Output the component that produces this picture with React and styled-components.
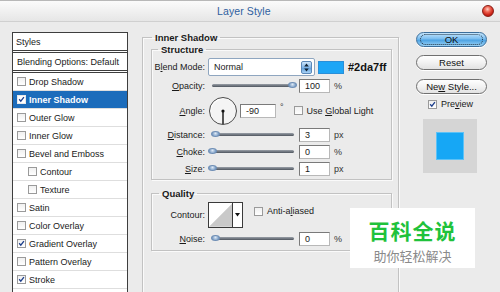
import React from "react";
import styled, { createGlobalStyle } from "styled-components";

const Global = createGlobalStyle`
  html, body { margin: 0; padding: 0; width: 500px; height: 292px; overflow: hidden; background: #ebebeb; }
  body { font-family: "Liberation Sans", Arial, sans-serif; font-size: 9px; color: #1a1a1a; }
  * { box-sizing: border-box; }
`;

const Dialog = styled.div`
  position: relative;
  width: 500px;
  height: 292px;
  overflow: hidden;
  background: #ebebeb;
  border-top: 1px solid #b8b8b8;
`;

const TitleBar = styled.div`
  height: 21px;
  display: flex;
  align-items: center;
  background: linear-gradient(#fbfbfb, #e6e6e6);
  border-bottom: 1px solid #d0d0d0;
`;

const Title = styled.div`
  margin-left: 217px;
  font-size: 10.5px;
  color: #2f5f9f;
  letter-spacing: 0.1px;
`;

const Close = styled.div`
  margin-left: auto;
  margin-right: 6px;
  width: 12px;
  height: 12px;
  border-radius: 50%;
  border: 1px solid #8a1e16;
  background: radial-gradient(circle at 45% 32%, #ffd0c4 0, #f06a58 30%, #cc2418 65%, #901008 100%);
`;

const Body = styled.div`
  display: flex;
  align-items: flex-start;
  padding: 10px 0 0 12px;
`;

/* ---------- left list ---------- */
const List = styled.div`
  width: 116px;
  background: #fff;
  border: 1px solid #3e3e3e;
  flex-shrink: 0;
`;

const Header = styled.div`
  height: 20px;
  display: flex;
  align-items: center;
  padding-left: 3px;
  border-bottom: 3px double #3e3e3e;
`;

const ListItem = styled.div`
  height: 18px;
  display: flex;
  align-items: center;
  gap: 3px;
  padding-left: ${(p) => (p.$sub ? 15 : 4)}px;
  border-bottom: 1px solid #dedede;
  background: ${(p) => (p.$sel ? "#1c6cbb" : "#fff")};
  color: ${(p) => (p.$sel ? "#fff" : "#1a1a1a")};
  font-weight: ${(p) => (p.$sel ? "bold" : "normal")};
`;

const BlendItem = styled(ListItem)`
  height: 20px;
  padding-left: 4px;
  border-bottom: 3px double #3e3e3e;
`;

const Box = styled.span`
  width: 9px;
  height: 9px;
  flex-shrink: 0;
  border: 1px solid ${(p) => (p.$light ? "#e8e8e8" : "#9a9a9a")};
  background: ${(p) => (p.$light ? "#fff" : "linear-gradient(#f0f0f0, #ffffff)")};
  display: inline-flex;
  align-items: center;
  justify-content: center;
`;

const Check = ({ on, light }) => (
  <Box $light={light}>
    {on && (
      <svg width="9" height="9" viewBox="0 0 9 9">
        <path d="M1.5 4.2 L3.6 6.6 L7.6 1.4" fill="none" stroke="#1d3f8c" strokeWidth="1.7" />
      </svg>
    )}
  </Box>
);

/* ---------- group boxes ---------- */
const Group = styled.fieldset`
  margin: ${(p) => p.$m || 0};
  padding: ${(p) => p.$pad || 0};
  border: 1px solid #c2c2c2;
  box-shadow: inset 1px 1px 0 #fafafa, 1px 1px 0 #fafafa;
  min-width: 0;
  width: ${(p) => p.$w}px;
  height: ${(p) => (p.$h ? p.$h + "px" : "auto")};
  flex-shrink: 0;
`;

const Legend = styled.legend`
  margin-left: ${(p) => p.$ml || 0}px;
  padding: 0 3px;
  font-weight: bold;
  font-size: 9.5px;
  line-height: 11px;
  color: #1a1a1a;
`;

const Row = styled.div`
  display: flex;
  align-items: ${(p) => p.$align || "center"};
  height: ${(p) => p.$h || 17}px;
  margin-top: ${(p) => p.$mt || 0}px;
`;

const Label = styled.span`
  width: 53px;
  text-align: right;
  flex-shrink: 0;
  margin-top: ${(p) => p.$mt || 0}px;
  white-space: nowrap;
`;

const Select = styled.div`
  margin-left: 3px;
  width: 107px;
  height: 18px;
  border: 1px solid #8fa6c0;
  border-radius: 2px;
  background: #fff;
  display: flex;
  align-items: center;
  padding-left: 5px;
`;

const Spin = styled.div`
  margin-left: auto;
  margin-right: 2px;
  width: 11px;
  height: 13px;
  border-radius: 2px;
  border: 1px solid #5c88b8;
  background: linear-gradient(#cfe6fb, #7fb3e6 50%, #5a9ad8 51%, #a9d2f6);
  display: flex;
  align-items: center;
  justify-content: center;
`;

const Swatch = styled.div`
  margin-left: 3px;
  width: 26px;
  height: 13px;
  background: #1ea6f6;
  border: 1px solid #2b8fd8;
`;

const Hex = styled.span`
  margin-left: 4px;
  font-weight: bold;
  font-size: 11px;
  color: #111;
`;

const Track = styled.div`
  position: relative;
  margin-left: 7px;
  width: 82px;
  height: 3px;
  border-radius: 2px;
  background: linear-gradient(#9aa0a8, #4e555e);
  flex-shrink: 0;
`;

const Knob = styled.span`
  position: absolute;
  top: -2px;
  width: 9px;
  height: 6px;
  margin-left: -4px;
  border-radius: 50%;
  background: radial-gradient(circle at 50% 35%, #dfeaf6, #7d9fc6 70%);
  border: 1px solid #6d8db4;
`;

const Input = styled.div`
  margin-left: ${(p) => p.$ml ?? 5}px;
  width: ${(p) => p.$w || 31}px;
  height: 14px;
  border: 1px solid #7a7a7a;
  border-right-color: #b8b8b8;
  border-bottom-color: #b8b8b8;
  background: #fff;
  display: flex;
  align-items: center;
  padding-left: 5px;
  flex-shrink: 0;
`;

const Unit = styled.span`
  margin-left: ${(p) => p.$ml ?? 4}px;
  color: #333;
  align-self: ${(p) => (p.$top ? "flex-start" : "auto")};
  margin-top: ${(p) => p.$mt || 0}px;
`;

const Dial = styled.div`
  margin-left: 4px;
  width: 28px;
  height: 28px;
  border-radius: 50%;
  border: 1px solid #4a4a4a;
  background: #f4f4f4;
  box-shadow: inset 1px 1px 1px #fff;
  flex-shrink: 0;
`;

const CheckLabel = styled.span`
  display: inline-flex;
  align-items: center;
  gap: 4px;
  margin-left: ${(p) => p.$ml || 0}px;
  margin-top: ${(p) => p.$mt || 0}px;
  white-space: nowrap;
`;

const ContourBox = styled.div`
  margin-left: 3px;
  width: 35px;
  height: 26px;
  border: 1px solid #3a3a3a;
  background: #fff;
  display: flex;
  flex-shrink: 0;
`;

const ContourArrow = styled.div`
  width: 10px;
  border-left: 1px solid #3a3a3a;
  display: flex;
  align-items: center;
  justify-content: center;
  background: #fff;
`;

/* ---------- right side ---------- */
const Side = styled.div`
  margin-left: 17px;
  width: 71px;
  display: flex;
  flex-direction: column;
`;

const Button = styled.div`
  position: relative;
  height: 15px;
  margin-top: ${(p) => p.$mt || 0}px;
  border-radius: 8px;
  border: 1px solid ${(p) => (p.$primary ? "#3c6f9c" : "#707070")};
  background: ${(p) =>
    p.$primary
      ? "linear-gradient(#c6e6fc, #79bdf0 45%, #4da3e3 55%, #9bd3f7)"
      : "linear-gradient(#ffffff, #f2f2f2 50%, #e2e2e2)"};
  display: flex;
  align-items: center;
  justify-content: center;
  font-size: 9.5px;
  color: #111;
  box-shadow: 0 1px 0 #fff;
  &::after {
    content: "";
    display: ${(p) => (p.$primary ? "block" : "none")};
    position: absolute;
    inset: 1px 3px;
    border-radius: 6px;
    border: 1px dotted #1c2c3c;
  }
`;

const PreviewCheck = styled(CheckLabel)`
  margin: 5px 0 0 12px;
`;

const PreviewBox = styled.div`
  margin: 10px 0 0 7px;
  width: 54px;
  height: 54px;
  background: #d5d5d5;
  display: flex;
  align-items: center;
  justify-content: center;
`;

const PreviewSquare = styled.div`
  width: 26px;
  height: 26px;
  background: #16a7f5;
  box-shadow: 0 0 0 1px #5cc2f7;
`;

/* ---------- watermark ---------- */
const Watermark = styled.div`
  position: absolute;
  left: 350px;
  top: 207px;
  width: 125px;
  height: 60px;
  padding-top: 7px;
  background: #fff;
  display: flex;
  flex-direction: column;
  align-items: center;
  font-family: "Noto Sans CJK SC", sans-serif;
`;

const WmBig = styled.div`
  font-size: 21px;
  line-height: 31px;
  height: 31px;
  font-weight: bold;
  color: #1fc23b;
  letter-spacing: 1px;
`;

const WmSmall = styled.div`
  font-size: 13px;
  line-height: 19px;
  height: 19px;
  color: #8a8a8a;
`;

const items = [
  { name: "Drop Shadow" },
  { name: "Inner Shadow", on: true, sel: true },
  { name: "Outer Glow" },
  { name: "Inner Glow" },
  { name: "Bevel and Emboss" },
  { name: "Contour", sub: true },
  { name: "Texture", sub: true },
  { name: "Satin" },
  { name: "Color Overlay" },
  { name: "Gradient Overlay", on: true },
  { name: "Pattern Overlay" },
  { name: "Stroke", on: true },
  { name: "" },
];

const Slider = ({ value }) => (
  <Track>
    <Knob style={{ left: `${value * 100}%` }} />
  </Track>
);

const SliderRow = ({ label, value, input, unit, mt }) => (
  <Row $mt={mt}>
    <Label>{label}</Label>
    <Slider value={value} />
    <Input>{input}</Input>
    <Unit>{unit}</Unit>
  </Row>
);

export default function App() {
  return (
    <>
      <Global />
      <Dialog>
        <TitleBar>
          <Title>Layer Style</Title>
          <Close />
        </TitleBar>
        <Body>
          <List>
            <Header>Styles</Header>
            <BlendItem>Blending Options: Default</BlendItem>
            {items.map((it, i) => (
              <ListItem key={i} $sel={it.sel} $sub={it.sub}>
                {it.name && <Check on={it.on} light={it.sel} />}
                {it.name}
              </ListItem>
            ))}
          </List>

          <Group $m="0 0 0 14px" $pad="1px 6px 0 8px" $w={257} $h={300}>
            <Legend $ml={1}>Inner Shadow</Legend>
            <Group $pad="3px 0 2px 0" $w={241}>
              <Legend $ml={6}>Structure</Legend>
              <Row $h={18}>
                <Label>
                  B<u>l</u>end Mode:
                </Label>
                <Select>
                  Normal
                  <Spin>
                    <svg width="5" height="9" viewBox="0 0 5 9">
                      <path d="M2.5 0.5 L4.8 3.6 L0.2 3.6 Z M2.5 8.5 L4.8 5.4 L0.2 5.4 Z" fill="#123" />
                    </svg>
                  </Spin>
                </Select>
                <Swatch />
                <Hex>#2da7ff</Hex>
              </Row>
              <SliderRow mt={1} label={<><u>O</u>pacity:</>} value={0.98} input="100" unit="%" />
              <Row $h={31} $mt={1}>
                <Label>
                  <u>A</u>ngle:
                </Label>
                <Dial>
                  <svg width="26" height="26" viewBox="0 0 26 26">
                    <line x1="13" y1="13" x2="13" y2="26" stroke="#111" strokeWidth="1.4" />
                    <circle cx="13" cy="13" r="1.6" fill="#111" />
                  </svg>
                </Dial>
                <Input $ml={3} $w={36}>-90</Input>
                <Unit $ml={4} $top $mt={7}>°</Unit>
                <CheckLabel $ml={10}>
                  <Check />
                  <span>
                    Use <u>G</u>lobal Light
                  </span>
                </CheckLabel>
              </Row>
              <SliderRow label={<><u>D</u>istance:</>} value={0.04} input="3" unit="px" />
              <SliderRow label={<><u>C</u>hoke:</>} value={0.0} input="0" unit="%" />
              <SliderRow label={<><u>S</u>ize:</>} value={0.0} input="1" unit="px" />
            </Group>

            <Group $m="8px 0 0 0" $pad="3px 0 3px 0" $w={241}>
              <Legend $ml={7}>Quality</Legend>
              <Row $h={26} $align="flex-start">
                <Label $mt={8}>Contour:</Label>
                <ContourBox>
                  <svg width="24" height="24" viewBox="0 0 24 24">
                    <path d="M0 24 L24 0 L24 24 Z" fill="#c9c9c9" />
                  </svg>
                  <ContourArrow>
                    <svg width="5" height="4" viewBox="0 0 5 4">
                      <path d="M0 0 L5 0 L2.5 3.5 Z" fill="#111" />
                    </svg>
                  </ContourArrow>
                </ContourBox>
                <CheckLabel $ml={11} $mt={4}>
                  <Check />
                  <span>
                    Anti-a<u>l</u>iased
                  </span>
                </CheckLabel>
              </Row>
              <SliderRow mt={2} label={<><u>N</u>oise:</>} value={0.04} input="0" unit="%" />
            </Group>
          </Group>

          <Side>
            <Button $primary>OK</Button>
            <Button $mt={8}>Reset</Button>
            <Button $mt={9}>
              <span>
                Ne<u>w</u> Style...
              </span>
            </Button>
            <PreviewCheck>
              <Check on />
              <span>
                Pre<u>v</u>iew
              </span>
            </PreviewCheck>
            <PreviewBox>
              <PreviewSquare />
            </PreviewBox>
          </Side>
        </Body>

        <Watermark>
          <WmBig>百科全说</WmBig>
          <WmSmall>助你轻松解决</WmSmall>
        </Watermark>
      </Dialog>
    </>
  );
}
